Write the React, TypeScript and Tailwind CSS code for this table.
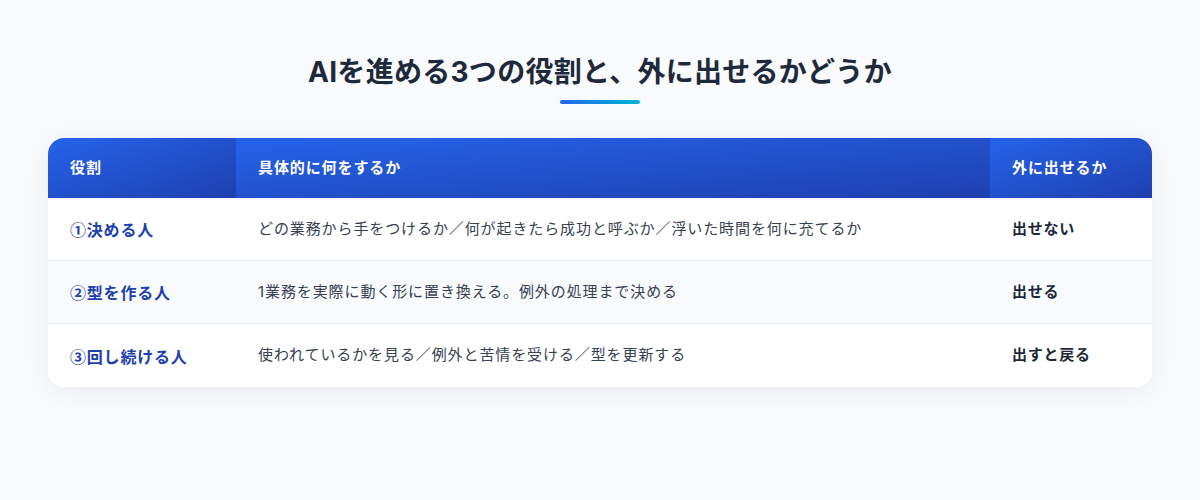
const rows = [
  {
    role: "①決める人",
    what: "どの業務から手をつけるか／何が起きたら成功と呼ぶか／浮いた時間を何に充てるか",
    out: "出せない",
  },
  {
    role: "②型を作る人",
    what: "1業務を実際に動く形に置き換える。例外の処理まで決める",
    out: "出せる",
  },
  {
    role: "③回し続ける人",
    what: "使われているかを見る／例外と苦情を受ける／型を更新する",
    out: "出すと戻る",
  },
];

export default function App() {
  return (
    <div className="min-h-[500px] w-full bg-[#f8fafc] pt-[52px] font-['Inter','Noto_Sans_CJK_JP',sans-serif]">
      <h1 className="text-center text-[28px] font-bold leading-[40px] tracking-[0.01em] text-[#1e293b]">
        AIを進める3つの役割と、外に出せるかどうか
      </h1>
      <div className="mx-auto mt-2 h-1 w-20 rounded-full bg-gradient-to-r from-[#2563eb] to-[#06b6d4]" />

      <div className="mx-12 mt-[34px] overflow-hidden rounded-2xl bg-white shadow-[0_4px_24px_rgba(15,23,42,0.06)]">
        <div className="grid grid-cols-[188px_1fr_162px]">
          <div className="flex h-[60px] items-center bg-gradient-to-br from-[#2563eb] to-[#1e40af] px-[22px] text-[15px] font-bold tracking-[0.06em] text-white">
            役割
          </div>
          <div className="flex h-[60px] items-center bg-gradient-to-br from-[#2563eb] to-[#1e40af] px-[22px] text-[15px] font-bold tracking-[0.06em] text-white">
            具体的に何をするか
          </div>
          <div className="flex h-[60px] items-center bg-gradient-to-br from-[#2563eb] to-[#1e40af] px-[22px] text-[15px] font-bold tracking-[0.06em] text-white">
            外に出せるか
          </div>
        </div>
        {rows.map((r, i) => (
          <div
            key={r.role}
            className={
              "grid h-[63px] grid-cols-[188px_1fr_162px] items-center " +
              (i % 2 === 1 ? "bg-[#f8fafc] " : "bg-white ") +
              (i < rows.length - 1 ? "border-b border-[#e2e8f0]" : "")
            }
          >
            <div className="px-[22px] font-['Noto_Sans_CJK_JP',sans-serif] text-[16px] font-bold tracking-[0.05em] text-[#1e40af]">
              {r.role}
            </div>
            <div className="px-[22px] text-[15px] tracking-[0.06em] text-[#374151]">{r.what}</div>
            <div className="px-[22px] text-[15px] font-bold tracking-[0.05em] text-[#1e293b]">{r.out}</div>
          </div>
        ))}
      </div>
    </div>
  );
}
